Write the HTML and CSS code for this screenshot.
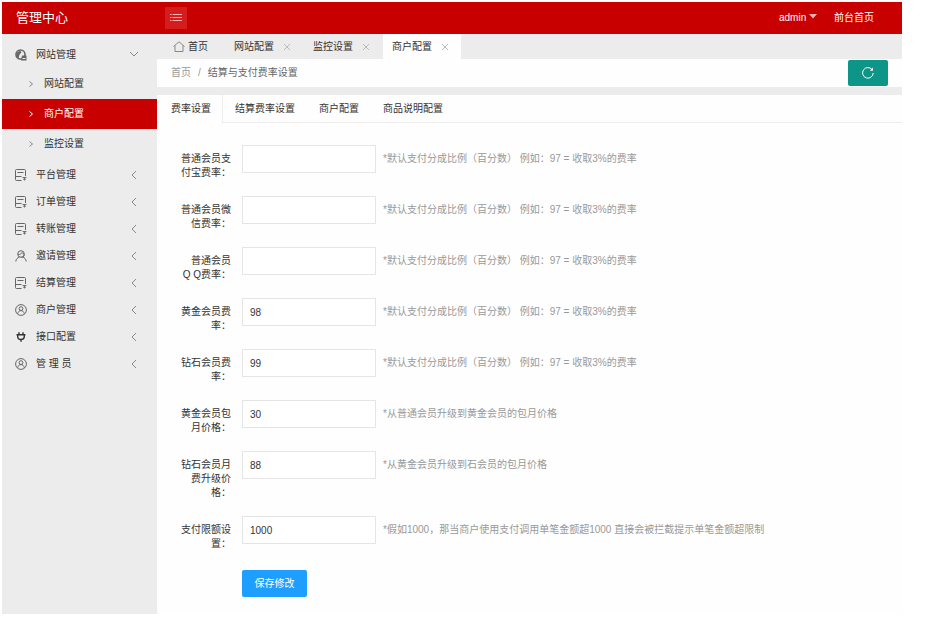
FILE: index.html
```html
<!DOCTYPE html>
<html lang="zh-CN">
<head>
  <meta charset="utf-8">
  <title>管理中心</title>
  <link rel="stylesheet" href="styles.css">
</head>
<body>
  <!-- icons used more than once -->
  <svg class="sprite" aria-hidden="true">
    <symbol id="icon-doc" viewBox="0 0 12 12">
      <path d="M6.500 11.500H1.500a1 1 0 0 1-1-1v-9a1 1 0 0 1 1-1h8a1 1 0 0 1 1 1V7M2.500 3.500h6M.5 7.500h6"/>
      <path d="M7.500 8.500h4M9.500 8.500v3M8 10.200h3" stroke-width=".9"/>
    </symbol>
    <symbol id="icon-user" viewBox="0 0 12 12">
      <circle cx="6" cy="6" r="5.400"/>
      <circle cx="6" cy="4.600" r="1.900"/>
      <path d="M2.700 9.800C3 7.800 4.300 6.600 6 6.600s3 1.200 3.300 3.200"/>
    </symbol>
    <symbol id="icon-left" viewBox="0 0 8 10">
      <path d="M6 1 2 5l4 4"/>
    </symbol>
    <symbol id="icon-right" viewBox="0 0 6 8">
      <path d="M1.500 1.500 4.500 4l-3 2.500"/>
    </symbol>
    <symbol id="icon-close" viewBox="0 0 8 8">
      <path d="m1 1 6 6M7 1 1 7"/>
    </symbol>
  </svg>

  <div class="app">
    <header class="header">
      <div class="logo">管理中心</div>
      <button type="button" class="menu-toggle" aria-label="菜单">
        <svg width="12" height="10" viewBox="0 0 12 10"><path d="M0 1.500h1.500M2.500 1.500H12M0 4.500h1.500M2.500 4.500H12M0 7.500h1.500M2.500 7.500H12"/></svg>
      </button>
      <nav class="header-nav">
        <a href="#">admin <svg width="8" height="5" viewBox="0 0 8 5"><path d="M0 0h8L4 4.500z"/></svg></a>
        <a href="#">前台首页</a>
      </nav>
    </header>

    <div class="body">
      <nav class="sidebar">
        <ul>
          <li>
            <a href="#" class="menu-item">
              <svg class="icon" viewBox="0 0 12 12"><circle cx="5.500" cy="5.500" r="4.500" stroke-width="1.600"/><path d="M1.500 4 5 1.500l1.500 2L4.500 5.500l-1 4L2 8z" fill="currentColor" stroke="none"/><path d="M7 6.500h4.500v5H6z" fill="currentColor" stroke="none"/><path d="M7.500 9.500h3" stroke="#ececec"/></svg>
              <span>网站管理</span>
              <svg class="arrow" viewBox="0 0 8 10"><path d="M0 2l4 4 4-4"/></svg>
            </a>
            <ul class="submenu">
              <li><a href="#"><svg><use href="#icon-right"/></svg>网站配置</a></li>
              <li><a href="#" class="active"><svg><use href="#icon-right"/></svg>商户配置</a></li>
              <li><a href="#"><svg><use href="#icon-right"/></svg>监控设置</a></li>
            </ul>
          </li>
          <li><a href="#" class="menu-item"><svg class="icon"><use href="#icon-doc"/></svg><span>平台管理</span><svg class="arrow"><use href="#icon-left"/></svg></a></li>
          <li><a href="#" class="menu-item"><svg class="icon"><use href="#icon-doc"/></svg><span>订单管理</span><svg class="arrow"><use href="#icon-left"/></svg></a></li>
          <li><a href="#" class="menu-item"><svg class="icon"><use href="#icon-doc"/></svg><span>转账管理</span><svg class="arrow"><use href="#icon-left"/></svg></a></li>
          <li>
            <a href="#" class="menu-item">
              <svg class="icon" viewBox="0 0 12 12"><circle cx="6" cy="4" r="3.300"/><path d="M3 4.500c2 0 3.500-.7 4-2 .5 1 1.200 1.500 2.200 1.700M.8 11.500C1 9 2.500 7.600 4.500 7M7.500 7c2 .6 3.500 2 3.700 4.500M9.200 5c0 1.500-1 2.200-2.700 2.200"/></svg>
              <span>邀请管理</span><svg class="arrow"><use href="#icon-left"/></svg>
            </a>
          </li>
          <li><a href="#" class="menu-item"><svg class="icon"><use href="#icon-doc"/></svg><span>结算管理</span><svg class="arrow"><use href="#icon-left"/></svg></a></li>
          <li><a href="#" class="menu-item"><svg class="icon"><use href="#icon-user"/></svg><span>商户管理</span><svg class="arrow"><use href="#icon-left"/></svg></a></li>
          <li>
            <a href="#" class="menu-item">
              <svg class="icon dark" viewBox="0 0 12 12"><path d="M1.500 3.700h9M2.700 4v1.500C2.700 7.500 4 8.500 6 8.500s3.300-1 3.300-3V4M4 3.700V1.300M8 3.700V1.300M6 8.500v2.200" stroke-width="1.400"/></svg>
              <span>接口配置</span><svg class="arrow"><use href="#icon-left"/></svg>
            </a>
          </li>
          <li><a href="#" class="menu-item"><svg class="icon"><use href="#icon-user"/></svg><span>管 理 员</span><svg class="arrow"><use href="#icon-left"/></svg></a></li>
        </ul>
      </nav>

      <main class="main">
        <div class="page-tabs">
          <a href="#" class="home"><svg width="12" height="12" viewBox="0 0 12 12"><path d="M.5 5.500 6 .8l5.500 4.700M2 4.500v6h8v-6"/></svg>首页</a>
          <a href="#">网站配置<svg class="close"><use href="#icon-close"/></svg></a>
          <a href="#">监控设置<svg class="close"><use href="#icon-close"/></svg></a>
          <a href="#" class="active">商户配置<svg class="close"><use href="#icon-close"/></svg></a>
        </div>

        <div class="crumbs">
          <a href="#">首页</a>
          <span class="slash">/</span>
          <span>结算与支付费率设置</span>
          <button type="button" class="refresh" aria-label="刷新">
            <svg width="14" height="14" viewBox="0 0 14 14"><path d="M11 3.500A5.300 5.300 0 1 0 12.200 7"/><path d="M12 1.500v3.300H8.800z" fill="currentColor" stroke="none"/></svg>
          </button>
        </div>

        <div class="card">
          <div class="card-tabs">
            <a href="#" class="active">费率设置</a>
            <a href="#">结算费率设置</a>
            <a href="#">商户配置</a>
            <a href="#">商品说明配置</a>
          </div>

          <form class="form">
            <div class="form-item">
              <label for="alipay">普通会员支付宝费率：</label>
              <input type="text" id="alipay" name="alipay">
              <span class="hint">*默认支付分成比例（百分数） 例如：97 = 收取3%的费率</span>
            </div>
            <div class="form-item">
              <label for="wechat">普通会员微信费率：</label>
              <input type="text" id="wechat" name="wechat">
              <span class="hint">*默认支付分成比例（百分数） 例如：97 = 收取3%的费率</span>
            </div>
            <div class="form-item">
              <label for="qq">普通会员 Q&nbsp;Q费率：</label>
              <input type="text" id="qq" name="qq">
              <span class="hint">*默认支付分成比例（百分数） 例如：97 = 收取3%的费率</span>
            </div>
            <div class="form-item">
              <label for="gold">黄金会员费率：</label>
              <input type="text" id="gold" name="gold" value="98">
              <span class="hint">*默认支付分成比例（百分数） 例如：97 = 收取3%的费率</span>
            </div>
            <div class="form-item">
              <label for="diamond">钻石会员费率：</label>
              <input type="text" id="diamond" name="diamond" value="99">
              <span class="hint">*默认支付分成比例（百分数） 例如：97 = 收取3%的费率</span>
            </div>
            <div class="form-item">
              <label for="goldPrice">黄金会员包月价格：</label>
              <input type="text" id="goldPrice" name="goldPrice" value="30">
              <span class="hint">*从普通会员升级到黄金会员的包月价格</span>
            </div>
            <div class="form-item">
              <label for="diamondPrice">钻石会员月费升级价格：</label>
              <input type="text" id="diamondPrice" name="diamondPrice" value="88">
              <span class="hint">*从黄金会员升级到石会员的包月价格</span>
            </div>
            <div class="form-item">
              <label for="limit">支付限额设置：</label>
              <input type="text" id="limit" name="limit" value="1000">
              <span class="hint">*假如1000，那当商户使用支付调用单笔金额超1000 直接会被拦截提示单笔金额超限制</span>
            </div>
            <button type="submit" class="btn-save">保存修改</button>
          </form>
        </div>
      </main>
    </div>
  </div>
</body>
</html>
```
FILE: styles.css
```css
* {
  box-sizing: border-box;
}

body {
  margin: 0;
  padding: 2px 40px 21px 2px;
  min-height: 100vh;
  display: flex;
  background: #fff;
  color: #333;
  font-family: "Liberation Sans", "Noto Sans CJK SC", sans-serif;
  font-size: 10px;
  line-height: 14px;
}

a {
  color: inherit;
  text-decoration: none;
}

ul {
  list-style: none;
  margin: 0;
  padding: 0;
}

button,
input {
  font: inherit;
}

button {
  border: none;
  padding: 0;
  cursor: pointer;
}

svg {
  fill: none;
  stroke: currentColor;
  flex: none;
}

.sprite {
  display: none;
}

.app {
  flex: 1;
  min-width: 0;
  display: flex;
  flex-direction: column;
}

/* header */
.header {
  display: flex;
  align-items: center;
  height: 32px;
  background: #c90000;
  color: #fff;
}

.logo {
  width: 163px;
  padding-left: 14px;
  font-size: 13px;
}

.menu-toggle {
  display: flex;
  align-items: center;
  justify-content: center;
  width: 22px;
  height: 22px;
  background: #d51d1d;
  color: #f5b5b5;
}

.header-nav {
  display: flex;
  gap: 17px;
  margin-left: auto;
  padding-right: 28px;
}

.header-nav svg {
  fill: #f3b0b0;
  stroke: none;
  vertical-align: 2px;
}

.body {
  flex: 1;
  display: flex;
}

/* sidebar */
.sidebar {
  flex: none;
  width: 155px;
  padding-top: 7px;
  background: #ececec;
}

.menu-item {
  display: flex;
  align-items: center;
  height: 27px;
  padding: 0 19px 0 13px;
}

.menu-item .icon {
  width: 12px;
  height: 12px;
  margin-right: 9px;
  color: #666;
}

.menu-item .dark {
  color: #333;
}

.menu-item .arrow {
  width: 8px;
  height: 10px;
  margin-left: auto;
  color: #888;
}

.submenu {
  padding: 1px 0 2px;
}

.submenu a {
  display: flex;
  align-items: center;
  gap: 10px;
  height: 30px;
  padding-left: 26px;
}

.submenu svg {
  width: 6px;
  height: 8px;
  color: #888;
}

.submenu .active,
.submenu .active svg {
  background: #c90000;
  color: #fff;
}

/* right side */
.main {
  flex: 1;
  min-width: 0;
  display: flex;
  flex-direction: column;
  background: #ececec;
}

.page-tabs {
  display: flex;
  gap: 1px;
  height: 25px;
}

.page-tabs a {
  display: flex;
  align-items: center;
  gap: 9px;
  padding: 0 12px 0 9px;
}

.page-tabs .home {
  gap: 3px;
  padding: 0 16px;
}

.page-tabs .home svg {
  color: #888;
}

.page-tabs .active {
  background: #fefefe;
}

.close {
  width: 8px;
  height: 8px;
  color: #bbb;
}

.crumbs {
  display: flex;
  align-items: center;
  gap: 7px;
  height: 28px;
  padding: 0 14px;
  background: #fefefe;
  color: #666;
}

.crumbs a,
.crumbs .slash {
  color: #999;
}

.refresh {
  display: flex;
  align-items: center;
  justify-content: center;
  width: 40px;
  height: 26px;
  margin-left: auto;
  border-radius: 2px;
  background: #0d9687;
  color: #fff;
}

.card {
  flex: 1;
  margin-top: 8px;
  background: #fefefe;
}

.card-tabs {
  display: flex;
  height: 28px;
  padding-left: 2px;
  border-bottom: 1px solid #ececec;
}

.card-tabs a {
  height: 28px;
  padding: 0 12px;
  line-height: 27px;
}

.card-tabs .active {
  padding-right: 11px;
  border-right: 1px solid #ececec;
  background: #fefefe;
}

.form {
  padding: 22px 14px 16px 24px;
}

.form-item {
  display: flex;
  align-items: flex-start;
  margin-bottom: 9px;
}

.form-item label {
  flex: none;
  width: 50px;
  margin-right: 11px;
  padding: 7px 0;
  text-align: right;
}

.form-item input {
  flex: none;
  width: 134px;
  height: 28px;
  padding: 0 7px;
  border: 1px solid #e4e6e6;
  background: #fff;
  color: #333;
}

.hint {
  padding: 7px 0 0 7px;
  color: #999;
}

.btn-save {
  display: block;
  width: 65px;
  height: 27px;
  margin: 12px 0 0 61px;
  border-radius: 2px;
  background: #1e9fff;
  color: #fff;
}
```
